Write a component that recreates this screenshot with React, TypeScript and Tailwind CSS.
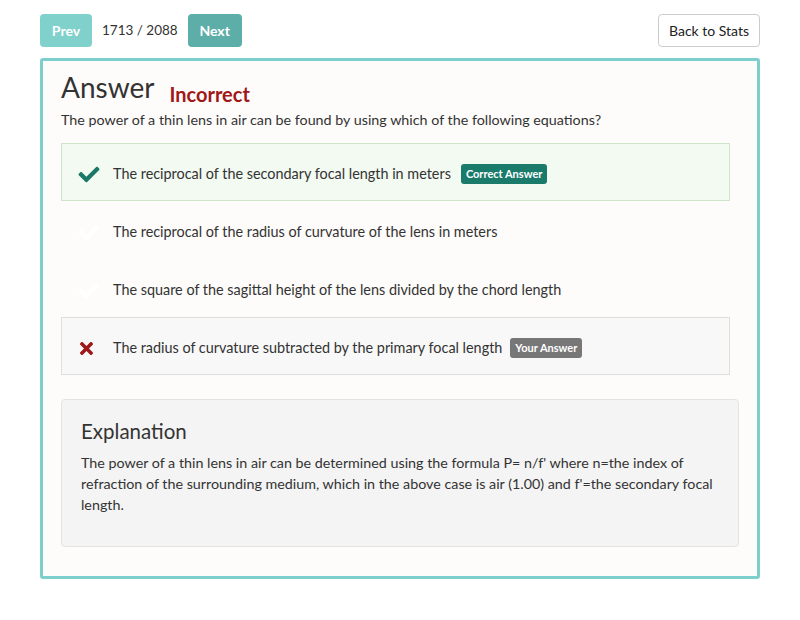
import React from 'react';
import { FaCheck, FaTimes } from 'react-icons/fa';

type Option = {
  text: string;
  state: 'correct' | 'wrong' | 'none';
};

const options: Option[] = [
  { text: 'The reciprocal of the secondary focal length in meters', state: 'correct' },
  { text: 'The reciprocal of the radius of curvature of the lens in meters', state: 'none' },
  { text: 'The square of the sagittal height of the lens divided by the chord length', state: 'none' },
  { text: 'The radius of curvature subtracted by the primary focal length', state: 'wrong' },
];

const OptionRow: React.FC<{ option: Option }> = ({ option }) => {
  const box =
    option.state === 'correct'
      ? 'bg-[#f2faf1] border-[#cfe6cc]'
      : option.state === 'wrong'
        ? 'bg-[#f8f8f8] border-[#dedede]'
        : 'bg-transparent border-transparent';

  return (
    <div className={`flex h-[58px] items-center border pl-[16px] pt-[4px] ${box}`}>
      <div className="flex w-[35px] items-center">
        {option.state === 'correct' && <FaCheck className="h-[21px] w-[22px] text-[#1b7766]" />}
        {option.state === 'wrong' && <FaTimes className="h-[19px] w-[17px] text-[#9d1818]" />}
        {option.state === 'none' && <FaCheck className="h-[21px] w-[22px] text-[#ffffff]" />}
      </div>
      <span className="text-[14.4px] text-[#333333]">{option.text}</span>
      {option.state === 'correct' && (
        <span className="ml-[10px] rounded-[3px] bg-[#1b7b6b] px-[5px] py-[3px] text-[11px] leading-[14px] font-bold text-white">
          Correct Answer
        </span>
      )}
      {option.state === 'wrong' && (
        <span className="ml-[8px] rounded-[3px] bg-[#777777] px-[5px] py-[3px] text-[11px] leading-[14px] font-bold text-white">
          Your Answer
        </span>
      )}
    </div>
  );
};

const App: React.FC = () => {
  return (
    <div className="min-h-[620px] bg-white px-[40px] pt-[14px] font-['Lato','Liberation_Sans',sans-serif] text-[#333333]">
      <div className="flex items-center justify-between">
        <div className="flex items-center">
          <button className="h-[33px] w-[52px] rounded-[4px] bg-[#80d0cc] text-[14px] font-bold text-white">
            Prev
          </button>
          <span className="mx-[10px] text-[13.5px] text-[#333333]">1713 / 2088</span>
          <button className="h-[33px] w-[54px] rounded-[4px] bg-[#5dada8] text-[14px] font-bold text-white">
            Next
          </button>
        </div>
        <button className="h-[33px] w-[102px] rounded-[4px] border border-[#cccccc] bg-white text-[14px] text-[#222222]">
          Back to Stats
        </button>
      </div>

      <div className="mt-[11px] rounded-[3px] border-[3px] border-[#7ccfcc] bg-[#fdfcfa] px-[18px] pb-[29px] pt-[8px]">
        <div className="flex items-end">
          <h1 className="text-[28px] leading-[36px] text-[#333333]">Answer</h1>
          <span className="mb-[-3px] ml-[15px] text-[20px] font-bold leading-[28px] text-[#a11717]">
            Incorrect
          </span>
        </div>
        <p className="mt-[5px] text-[14.3px] leading-[20px] text-[#333333]">
          The power of a thin lens in air can be found by using which of the following equations?
        </p>

        <div className="mr-[9px] mt-[13px] flex flex-col">
          {options.map((o) => (
            <OptionRow key={o.text} option={o} />
          ))}
        </div>

        <div className="mt-[24px] rounded-[4px] border border-[#e3e3e3] bg-[#f4f4f4] px-[19px] pb-[31px] pt-[17px]">
          <h2 className="text-[20.5px] leading-[28px] text-[#333333]">Explanation</h2>
          <p className="mt-[7px] text-[14.3px] leading-[21px] text-[#333333]">
            The power of a thin lens in air can be determined using the formula P= n/f' where n=the index of
            refraction of the surrounding medium, which in the above case is air (1.00) and f'=the secondary focal
            length.
          </p>
        </div>
      </div>
    </div>
  );
};

export default App;
